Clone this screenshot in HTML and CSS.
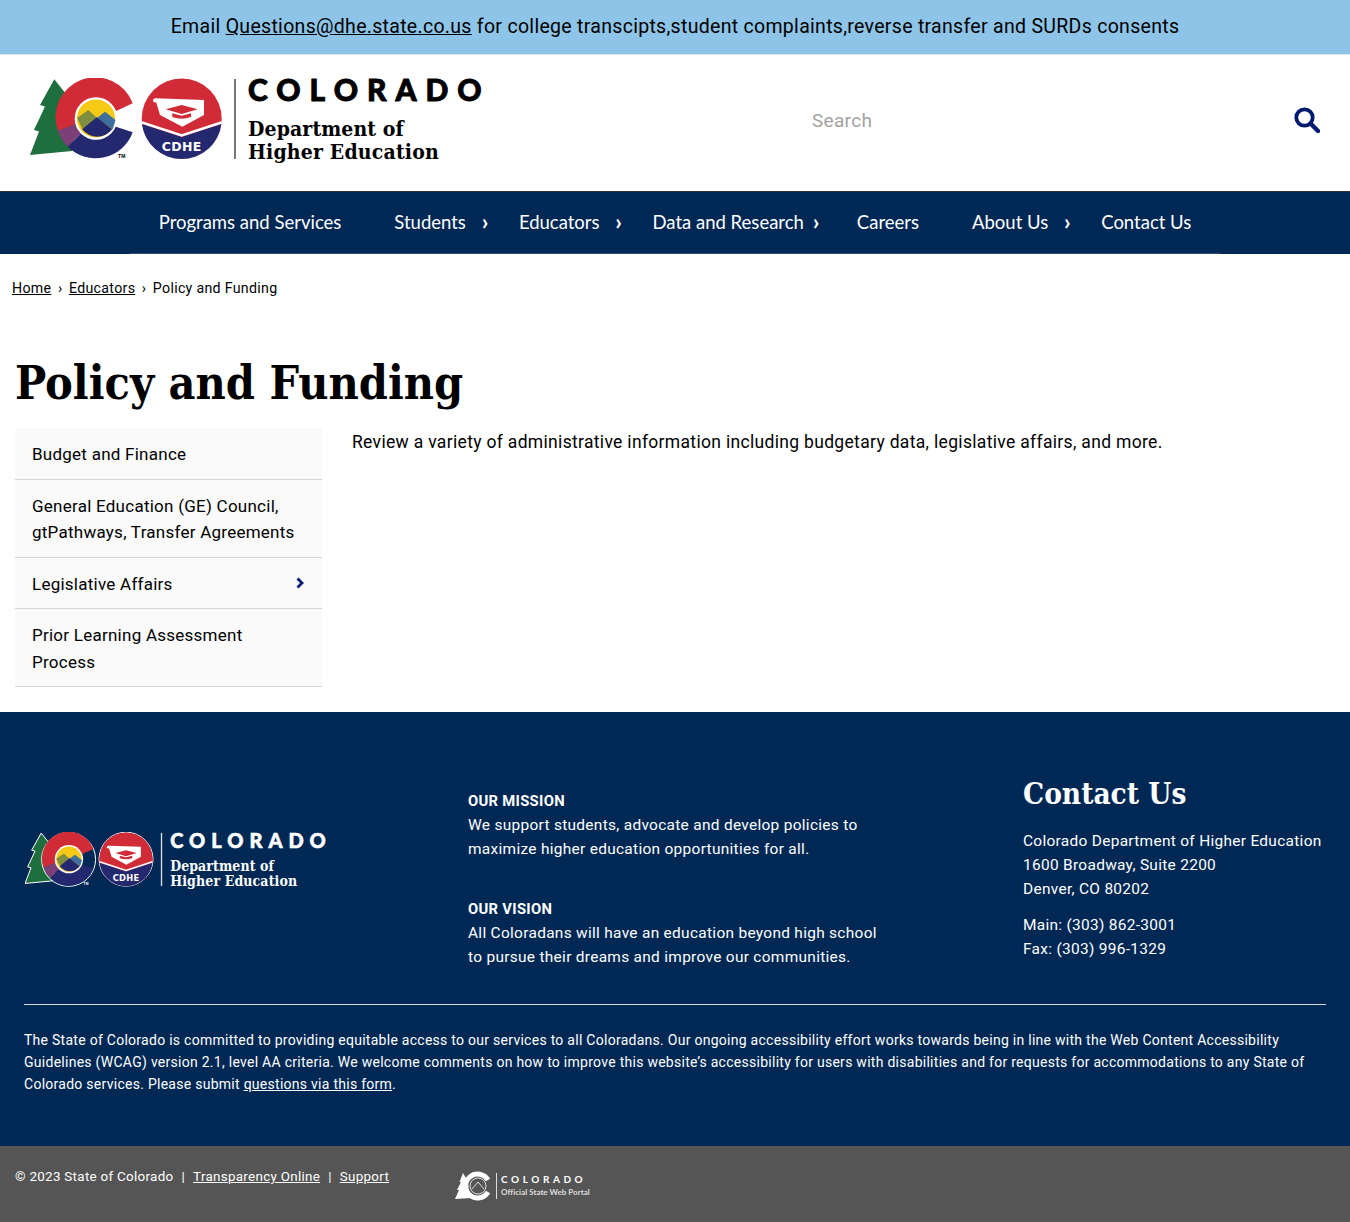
FILE: index.html
```html
<!DOCTYPE html>
<html lang="en">
<head>
  <meta charset="UTF-8">
  <title>Policy and Funding</title>
  <link rel="stylesheet" href="styles.css">
</head>
<body>
  <svg class="defs" width="0" height="0" aria-hidden="true">
    <symbol id="cdhe-logo" viewBox="0 0 452 85">
      <!-- tree -->
      <path class="logo-tree" d="M24.3 1.3 L10 27 L15 28.5 L4 52 L9 53.500 L0 77 L42 73 L46 40 L36 16 Z"/>
      <!-- C -->
      <circle class="logo-edge" cx="65.500" cy="40.800" r="40.500"/>
      <path fill="#d02b37" d="M102.700 25.300 A39.500 39.500 0 1 0 28 53 L46 46 A21 21 0 0 1 85.700 33.300 Z"/>
      <path fill="#7d3f78" d="M28 53 A39.500 39.500 0 0 0 37.700 68.800 L51.200 55.300 A21 21 0 0 1 46 46 Z"/>
      <path fill="#24286f" d="M37.700 68.800 A39.500 39.500 0 0 0 102.700 54.200 L85.200 48.500 A21 21 0 0 1 51.200 55.300 Z"/>
      <circle cx="66" cy="40.500" r="21.300" fill="#fff"/>
      <circle cx="66" cy="40.500" r="19" fill="#f6c914"/>
      <path fill="#7f8f3f" d="M47 40 L58.300 32 L67 40 L53 52 Z"/>
      <path fill="#3f6f9f" d="M67 40 L75 33.700 L85.500 42 L82.700 51.300 Z"/>
      <path fill="#24286f" d="M52.200 51.300 L66.700 39.300 L82.200 51.300 A19 19 0 0 1 52.200 51.300 Z"/>
      <text class="logo-tm" x="88" y="80">TM</text>
      <!-- seal -->
      <circle class="logo-edge" cx="151.700" cy="40.500" r="40.500"/>
      <circle cx="151.700" cy="40.500" r="40" fill="#d02b37"/>
      <path fill="#24286f" d="M112 46 L151.700 59 L191.400 46 A40 40 0 0 1 112 46 Z"/>
      <path fill="none" stroke="#fff" stroke-width="2.400" d="M112 44.500 L151.700 57.500 L191.400 44.500"/>
      <path fill="#fff" d="M125 20.300 L174 22 L174 37 L152.300 48.700 L130 37 Z"/>
      <circle cx="125" cy="22.500" r="2" fill="#fff"/>
      <path fill="#d02b37" d="M135.700 31.300 L151.700 27 L167.700 31.300 L151.700 36 Z"/>
      <path fill="#d02b37" d="M142.300 35.300 L151.700 37.800 L161 35.300 L161 39 Q151.700 42.500 142.300 39 Z"/>
      <text class="logo-seal-text" x="131.700" y="72.700" textLength="40">CDHE</text>
      <!-- wordmark -->
      <rect class="logo-rule" x="204" y="1" width="2" height="80"/>
      <text class="logo-state" x="218" y="23" textLength="234">COLORADO</text>
      <text class="logo-dept" x="218" y="58" textLength="156">Department of</text>
      <text class="logo-dept" x="218" y="81" textLength="191">Higher Education</text>
    </symbol>
  </svg>

  <div class="notice">
    Email <a href="#">Questions@dhe.state.co.us</a> for college transcipts,student complaints,reverse transfer and SURDs consents
  </div>

  <header class="site-header">
    <a class="brand" href="#" aria-label="Colorado Department of Higher Education">
      <svg class="brand-logo"><use href="#cdhe-logo"/></svg>
    </a>
    <div class="search">
      <span class="search-label">Search</span>
      <svg class="search-icon" viewBox="0 0 26 26">
        <circle cx="10.500" cy="10.500" r="8.200" fill="none" stroke="#001a70" stroke-width="3.800"/>
        <path d="M16.800 16.800 L24 24" stroke="#001a70" stroke-width="4.400" stroke-linecap="round"/>
      </svg>
    </div>
  </header>

  <nav class="main-nav">
    <ul class="nav-list">
      <li class="nav-item"><a href="#">Programs and Services</a></li>
      <li class="nav-item has-sub"><a href="#">Students</a></li>
      <li class="nav-item has-sub"><a href="#">Educators</a></li>
      <li class="nav-item has-sub tight"><a href="#">Data and Research</a></li>
      <li class="nav-item"><a href="#">Careers</a></li>
      <li class="nav-item has-sub"><a href="#">About Us</a></li>
      <li class="nav-item"><a href="#">Contact Us</a></li>
    </ul>
  </nav>

  <div class="breadcrumbs">
    <a href="#">Home</a><span class="crumb-sep">›</span><a href="#">Educators</a><span class="crumb-sep">›</span><span>Policy and Funding</span>
  </div>

  <main class="page">
    <h1>Policy and Funding</h1>
    <div class="page-body">
      <ul class="side-menu">
        <li><a href="#">Budget and Finance</a></li>
        <li><a href="#">General Education (GE) Council, gtPathways, Transfer Agreements</a></li>
        <li class="has-child"><a href="#">Legislative Affairs</a>
          <svg class="side-chevron" viewBox="0 0 8 12"><path d="M1.500 1.500 L6 6 L1.500 10.500" fill="none" stroke="#001a70" stroke-width="2.800"/></svg>
        </li>
        <li><a href="#">Prior Learning Assessment<br>Process</a></li>
      </ul>
      <p class="intro">Review a variety of administrative information including budgetary data, legislative affairs, and more.</p>
    </div>
  </main>

  <footer class="site-footer">
    <div class="footer-top">
      <svg class="footer-logo"><use href="#cdhe-logo"/></svg>
      <div class="footer-mission">
        <p><strong>OUR MISSION</strong><br>We support students, advocate and develop policies to<br>maximize higher education opportunities for all.</p>
        <p><strong>OUR VISION</strong><br>All Coloradans will have an education beyond high school<br>to pursue their dreams and improve our communities.</p>
      </div>
      <div class="footer-contact">
        <h2>Contact Us</h2>
        <p>Colorado Department of Higher Education<br>1600 Broadway, Suite 2200<br>Denver, CO 80202</p>
        <p>Main: (303) 862-3001<br>Fax: (303) 996-1329</p>
      </div>
    </div>
    <div class="footer-legal">
      <p>The State of Colorado is committed to providing equitable access to our services to all Coloradans. Our ongoing accessibility effort works towards being in line with the Web Content Accessibility Guidelines (WCAG) version 2.1, level AA criteria. We welcome comments on how to improve this website’s accessibility for users with disabilities and for requests for accommodations to any State of Colorado services. Please submit <a href="#">questions via this form</a>.</p>
    </div>
  </footer>

  <div class="sub-footer">
    <div class="sub-links">© 2023 State of Colorado<span class="sub-sep">|</span><a href="#">Transparency Online</a><span class="sub-sep">|</span><a href="#">Support</a></div>
    <svg class="portal-logo" viewBox="0 0 135 30">
      <path fill="#fff" d="M8 2 L12 9 L10 9 L14 16 L13 16 L16 27 L0 28 L4 19 L2 19 L6 11 L4.500 11 Z"/>
      <path fill="none" stroke="#fff" stroke-width="5" d="M33 9 A12 12 0 1 0 33 21"/>
      <circle cx="23" cy="15" r="8" fill="none" stroke="#fff" stroke-width="0.800"/>
      <path fill="none" stroke="#fff" stroke-width="0.800" d="M17 18 L23 11 L29 18"/>
      <rect x="41" y="2" width="1" height="26" fill="#ddd"/>
      <text class="portal-state" x="46" y="12" textLength="82">COLORADO</text>
      <text class="portal-sub" x="46" y="24" textLength="89">Official State Web Portal</text>
    </svg>
  </div>
</body>
</html>
```
FILE: styles.css
```css
* {
  box-sizing: border-box;
}

body {
  margin: 0;
  font-family: "Roboto", sans-serif;
  font-size: 16px;
  letter-spacing: 0.3px;
  color: #000;
  background-color: #fff;
}

a {
  color: inherit;
}

.defs {
  display: block;
  height: 0;
}

/* logo parts */
.logo-tree {
  fill: #1f6f3e;
  stroke: var(--logo-edge, none);
  stroke-width: 1.500;
}

.logo-edge {
  fill: none;
  stroke: var(--logo-edge, none);
  stroke-width: 1.500;
}

.logo-tm {
  font: bold 5px "Liberation Sans", sans-serif;
  fill: currentColor;
}

.logo-seal-text {
  font: bold 12.500px "DejaVu Sans", sans-serif;
  fill: #fff;
}

.logo-rule {
  fill: var(--logo-rule, #777);
}

.logo-state {
  font: 900 30px "Lato", sans-serif;
  fill: currentColor;
  stroke: currentColor;
  stroke-width: 0.900;
}

.logo-dept {
  font: bold 21px "DejaVu Serif Condensed", "DejaVu Serif", serif;
  fill: currentColor;
}

.notice {
  height: 55px;
  padding-top: 14px;
  background-color: #8dc4e8;
  border-bottom: 1px solid #e6e6e6;
  text-align: center;
  font-size: 19.500px;
  line-height: 26px;
}

.site-header {
  display: flex;
  justify-content: space-between;
  align-items: center;
  height: 136px;
  padding: 0 30px 6px;
}

.brand {
  display: block;
  height: 85px;
}

.brand-logo {
  display: block;
  width: 452px;
  height: 85px;
  color: #000;
}

.search {
  display: flex;
  justify-content: space-between;
  align-items: center;
  width: 508px;
}

.search-label {
  font-size: 19px;
  color: #a3a3a3;
}

.search-icon {
  width: 26px;
  height: 26px;
}

.main-nav {
  background-color: #002855;
  height: 63px;
  border-top: 1px solid #333;
}

.nav-list {
  display: flex;
  justify-content: center;
  list-style: none;
  margin: 0 auto;
  padding: 0;
  width: 1090px;
  height: 62px;
  border-bottom: 1px solid #2c4c70;
}

.nav-item {
  position: relative;
  padding: 0 26.500px;
  line-height: 60px;
  font-family: "Lato", sans-serif;
  font-size: 18.500px;
  letter-spacing: 0;
  white-space: nowrap;
  color: #fff;
}

.nav-item a {
  text-decoration: none;
}

.has-sub::after {
  content: "›";
  position: absolute;
  right: 4px;
  top: -1px;
  font-size: 23px;
  font-weight: bold;
}

.has-sub.tight::after {
  right: 11px;
}

.breadcrumbs {
  padding: 24px 12px 0;
  font-size: 14.200px;
  line-height: 20px;
}

.crumb-sep {
  margin: 0 6.500px;
}

.page {
  padding: 60px 15px 25px;
}

h1 {
  margin: 0 0 20px;
  font-family: "DejaVu Serif Condensed", "DejaVu Serif", serif;
  font-size: 46.300px;
  line-height: 50px;
  font-weight: bold;
  letter-spacing: 0;
}

.page-body {
  display: flex;
  gap: 30px;
}

.side-menu {
  flex: 0 0 307px;
  list-style: none;
  margin: 0;
  padding: 0;
}

.side-menu li {
  position: relative;
  padding: 13px 12px 11px 17px;
  background-color: #fafafa;
  border-bottom: 1px solid #d5d5d5;
  font-size: 17px;
  letter-spacing: 0.250px;
  line-height: 26.500px;
}

.side-menu a {
  text-decoration: none;
}

.side-chevron {
  position: absolute;
  right: 18px;
  top: 19px;
  width: 8px;
  height: 12px;
}

.intro {
  margin: 1px 0 0;
  font-size: 17.500px;
  letter-spacing: 0.320px;
  line-height: 26px;
}

.site-footer {
  --logo-edge: #fff;
  --logo-rule: #ddd;
  background-color: #002855;
  color: #fff;
  height: 434px;
  padding: 0 24px;
  font-size: 15.450px;
}

.footer-top {
  display: flex;
  height: 293px;
  border-bottom: 1px solid #d8d8d8;
}

.footer-logo {
  flex: 0 0 301px;
  width: 301px;
  height: 57px;
  margin: 120px 0 0 1px;
  color: #fff;
}

.footer-mission {
  flex: 0 0 555px;
  margin-left: 142px;
  padding-top: 77px;
  line-height: 24px;
}

.footer-mission p {
  margin: 0 0 36px;
}

.footer-mission strong {
  font-size: 14.800px;
  font-weight: 700;
}

.footer-contact {
  padding-top: 63px;
  line-height: 24px;
}

.footer-contact h2 {
  margin: 0 0 16px;
  font-family: "DejaVu Serif Condensed", "DejaVu Serif", serif;
  font-size: 29.500px;
  line-height: 38px;
  font-weight: bold;
  letter-spacing: 0;
}

.footer-contact p {
  margin: 0 0 12px;
}

.footer-legal {
  padding-top: 24px;
  font-size: 14px;
  letter-spacing: 0.270px;
  line-height: 22px;
}

.footer-legal p {
  margin: 0;
}

.sub-footer {
  display: flex;
  height: 76px;
  background-color: #555;
  color: #fff;
  padding: 21px 0 0 15px;
  font-size: 13.400px;
  line-height: 20px;
}

.sub-links {
  width: 440px;
}

.sub-sep {
  margin: 0 8px;
}

.portal-logo {
  width: 135px;
  height: 30px;
  margin-top: 4px;
}

.portal-state {
  font: bold 10px "Lato", sans-serif;
  fill: #fff;
}

.portal-sub {
  font: bold 8px "Lato", sans-serif;
  fill: #ddd;
}
```
